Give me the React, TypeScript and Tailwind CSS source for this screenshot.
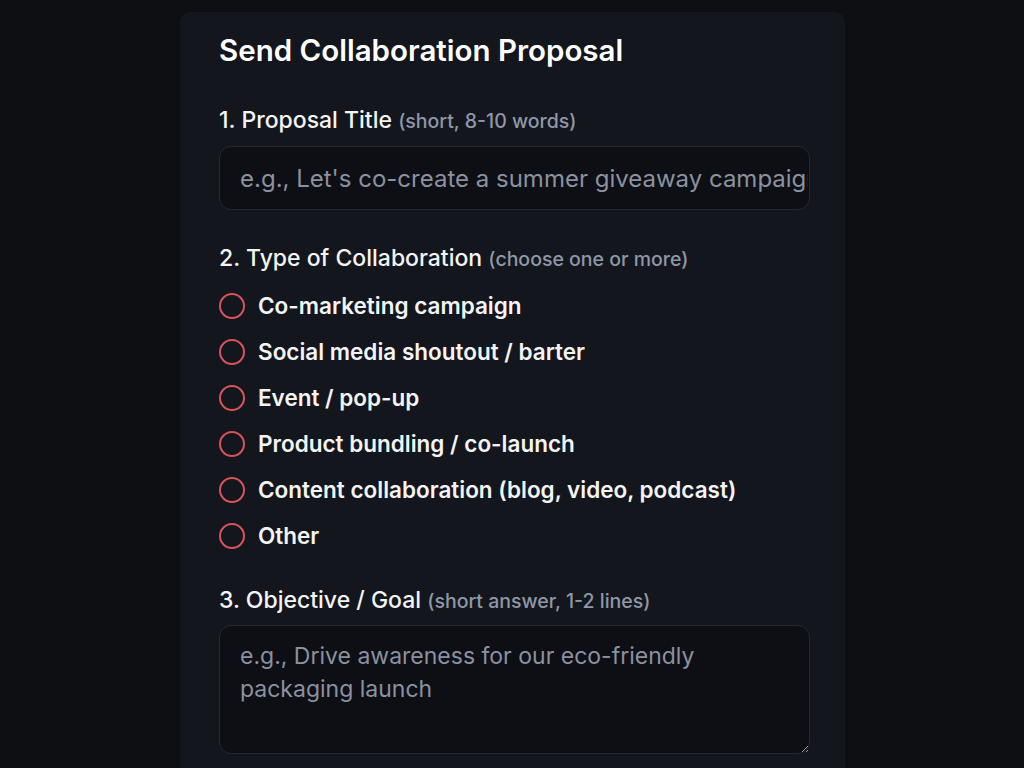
const options = [
  "Co-marketing campaign",
  "Social media shoutout / barter",
  "Event / pop-up",
  "Product bundling / co-launch",
  "Content collaboration (blog, video, podcast)",
  "Other",
];

function Label({ n, title, hint }: { n: number; title: string; hint: string }) {
  return (
    <p className="h-[28px] whitespace-nowrap text-[23px] leading-[28px] font-medium text-[#f3f4f6]">
      {n}. {title}{" "}
      <span className="text-[19.5px] font-medium text-[#8f97a8]">({hint})</span>
    </p>
  );
}

export default function App() {
  return (
    <div
      className="min-h-[768px] bg-[#0d0f13] pt-[12px]"
      style={{ fontFamily: "Inter, 'Noto Sans', sans-serif" }}
    >
      <div className="ml-[180px] w-[665px] rounded-t-[10px] bg-[#13161c] pl-[39px] pr-[35px] pt-[22px] pb-[20px]">
        <h1 className="text-[29.5px] leading-[32px] font-semibold text-white">
          Send Collaboration Proposal
        </h1>

        {/* 1 */}
        <div className="mt-[40px]">
          <Label n={1} title="Proposal Title" hint="short, 8-10 words" />
          <input
            type="text"
            placeholder="e.g., Let's co-create a summer giveaway campaign"
            className="mt-[12px] block h-[64px] w-full rounded-[12px] border border-[#252932] bg-[#0d0f14] pl-[20px] pr-[1px] text-[24px] text-white outline-none placeholder:text-[#8a91a1]"
          />
        </div>

        {/* 2 */}
        <div className="mt-[34px]">
          <Label n={2} title="Type of Collaboration" hint="choose one or more" />
          <ul className="mt-[11px]">
            {options.map((o) => (
              <li key={o} className="flex h-[46px] items-center gap-[13px]">
                <span className="h-[26px] w-[26px] shrink-0 rounded-full border-2 border-[#d9545a]" />
                <span className="whitespace-nowrap text-[22.5px] font-semibold text-[#f3f4f6]">{o}</span>
              </li>
            ))}
          </ul>
        </div>

        {/* 3 */}
        <div className="mt-[27px]">
          <Label n={3} title="Objective / Goal" hint="short answer, 1-2 lines" />
          <textarea
            placeholder="e.g., Drive awareness for our eco-friendly packaging launch"
            className="mt-[11px] block h-[129px] w-full rounded-[12px] border border-[#252932] bg-[#0d0f14] px-[20px] py-[14px] text-[23px] leading-[33px] text-white outline-none placeholder:text-[#8a91a1] [color-scheme:dark]"
          />
        </div>
      </div>
    </div>
  );
}
